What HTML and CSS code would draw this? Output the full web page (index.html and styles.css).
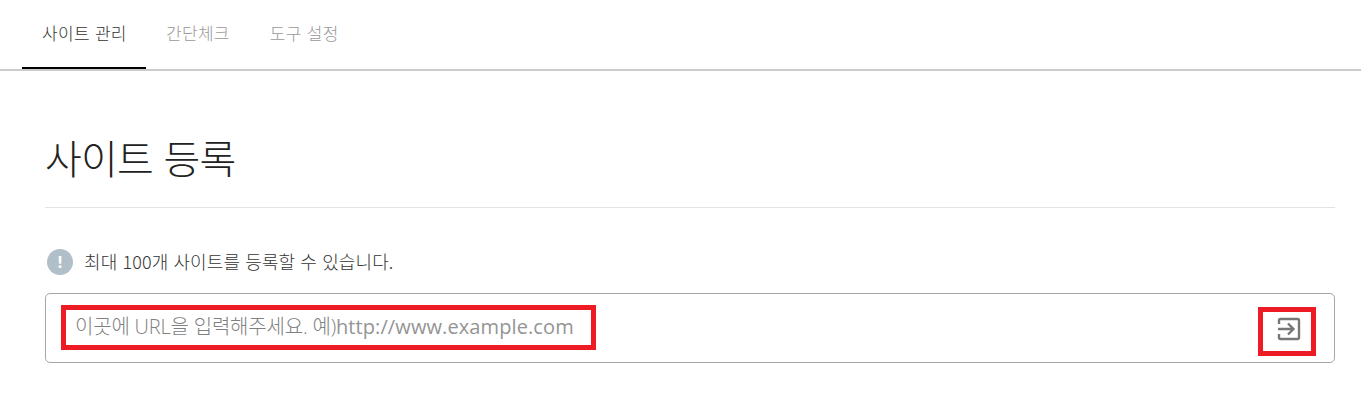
FILE: index.html
```html
<!DOCTYPE html>
<html lang="ko">
<head>
<meta charset="utf-8">
<title>사이트 등록</title>
<link rel="stylesheet" href="styles.css">
</head>
<body>
<nav class="tabs">
  <a class="tab active">사이트 관리</a>
  <a class="tab">간단체크</a>
  <a class="tab">도구 설정</a>
</nav>
<main class="content">
  <h1 class="title">사이트 등록</h1>
  <p class="note">
    <span class="note-icon">!</span>
    <span class="note-text">최대 100개 사이트를 등록할 수 있습니다.</span>
  </p>
  <form class="url-box">
    <span class="placeholder">이곳에 URL을 입력해주세요. 예)<span class="placeholder-url">http://www.example.com</span></span>
    <svg class="go-icon" width="24" height="24" viewBox="0 0 24 24" fill="none" stroke="#777" stroke-width="2.400">
      <path d="M2 7V3.500Q2 2 3.500 2H20.500Q22 2 22 3.500V20.500Q22 22 20.500 22H3.500Q2 22 2 20.500V17"/>
      <path d="M1 12H16M11 6.500L16.500 12L11 17.500"/>
    </svg>
    <span class="mark mark-text"></span>
    <span class="mark mark-icon"></span>
  </form>
</main>
</body>
</html>
```
FILE: styles.css
```css
* { box-sizing: border-box; }
html, body { margin: 0; padding: 0; }
body {
  background: #fff;
  font-family: "Noto Sans CJK KR", "Noto Sans", sans-serif;
  color: #333;
  overflow: hidden;
}
.tabs {
  display: flex;
  height: 71px;
  padding-left: 22px;
  border-bottom: 2px solid #ccc;
}
.tab {
  height: 69px;
  padding: 0 20px;
  font-size: 17px;
  font-weight: 300;
  line-height: 66px;
  letter-spacing: 0.3px;
  color: #999;
  white-space: nowrap;
}
.tab.active {
  width: 124px;
  color: #333;
  border-bottom: 2px solid #000;
}
.content {
  padding: 0 26px 0 45px;
}
.title {
  margin: 0;
  height: 137px;
  padding-top: 52px;
  border-bottom: 1px solid #e3e3e3;
  font-size: 40px;
  line-height: 68px;
  font-weight: 300;
  letter-spacing: -0.8px;
  color: #222;
}
.note {
  display: flex;
  align-items: center;
  gap: 11px;
  margin: 0;
  padding: 23px 0 0 2px;
  height: 85px;
  font-size: 18px;
  font-weight: 300;
  letter-spacing: 0.1px;
  color: #333;
}
.note-text {
  line-height: 24px;
  padding-bottom: 2px;
}
.note-icon {
  width: 26px;
  height: 26px;
  border-radius: 50%;
  background: #b0bfc8;
  color: #fff;
  font-family: "Noto Sans", sans-serif;
  font-weight: 700;
  font-size: 16px;
  line-height: 26px;
  text-align: center;
}
.url-box {
  position: relative;
  display: flex;
  align-items: center;
  justify-content: space-between;
  height: 70px;
  padding: 0 33px 6px 29px;
  border: 1px solid #a6a6a6;
  border-radius: 5px;
}
.placeholder {
  font-family: "Open Sans", "Noto Sans CJK KR", sans-serif;
  font-size: 20px;
  font-weight: 300;
  letter-spacing: -0.2px;
  color: #808080;
  white-space: nowrap;
}
.placeholder-url {
  font-weight: 400;
  letter-spacing: 0.1px;
  color: #949494;
}
.go-icon {
  margin-top: 8px;
}
.mark {
  position: absolute;
  border: 5px solid #ed1c24;
}
.mark-text {
  left: 15px;
  top: 11px;
  width: 535px;
  height: 45px;
}
.mark-icon {
  left: 1212px;
  top: 13px;
  width: 58px;
  height: 49px;
}
```
